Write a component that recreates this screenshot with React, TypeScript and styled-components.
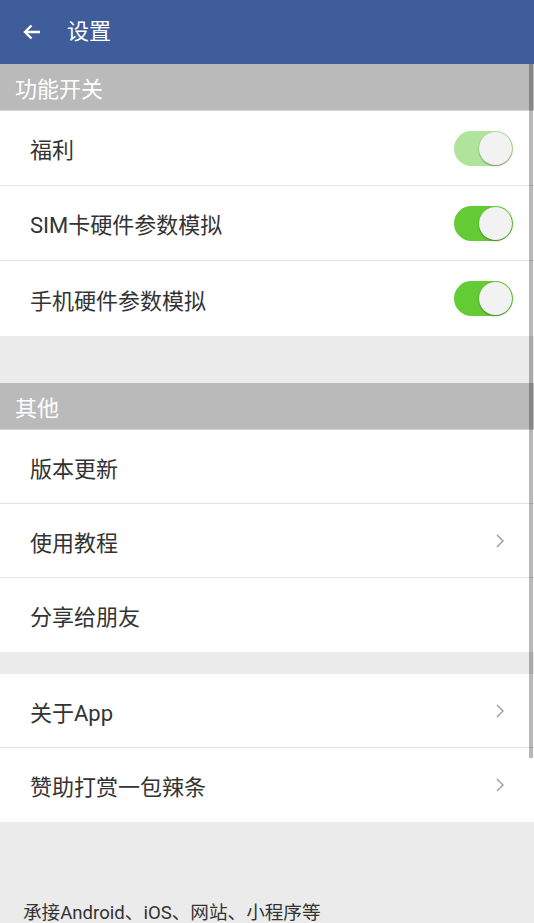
import React from 'react';
import styled, { createGlobalStyle } from 'styled-components';

const GlobalStyle = createGlobalStyle`
  html, body {
    margin: 0;
    padding: 0;
    background: #ebebeb;
  }
  body {
    font-family: Roboto, "Noto Sans CJK SC", sans-serif;
    overflow: hidden;
  }
`;

const Page = styled.div`
  position: relative;
  width: 534px;
  height: 923px;
  overflow: hidden;
  background: #ebebeb;
`;

const Header = styled.header`
  display: flex;
  align-items: center;
  height: 64px;
  padding-left: 20px;
  background: #3f5d9a;
  color: #fff;
`;

const BackButton = styled.div`
  display: flex;
  align-items: center;
  justify-content: center;
  width: 24px;
  height: 24px;
  margin-right: 23px;
`;

const Title = styled.h1`
  margin: 0;
  font-size: 22px;
  font-weight: 400;
  line-height: 1;
`;

const SectionTitle = styled.div`
  display: flex;
  align-items: center;
  height: 46px;
  padding-left: 15px;
  background: #bababa;
  color: #fff;
  font-size: 22px;
  border-bottom: 1px solid #d6d6d6;
`;

const Group = styled.div`
  background: #fff;
`;

const Row = styled.div<{ $h: number }>`
  display: flex;
  align-items: center;
  justify-content: space-between;
  height: ${p => p.$h}px;
  padding: 0 22px 0 30px;
  border-bottom: 1px solid #e2e2e2;
  box-sizing: content-box;
  color: #333;
  font-size: 22px;

  &:last-child {
    border-bottom: none;
    height: ${p => p.$h + 1}px;
  }
`;

const Spacer = styled.div<{ $h: number }>`
  height: ${p => p.$h}px;
  background: #ebebeb;
`;

const Toggle = styled.div<{ $faded?: boolean }>`
  position: relative;
  width: 59px;
  height: 35px;
  margin-right: -1px;
  border-radius: 18px;
  background: ${p => (p.$faded ? '#b0e39c' : '#63cb33')};
`;

const Knob = styled.div`
  position: absolute;
  right: 1px;
  top: 1px;
  width: 33px;
  height: 33px;
  border-radius: 50%;
  background: #f2f2f2;
  box-shadow: 0 1px 2px rgba(0, 0, 0, 0.35);
`;

const ChevronIcon = styled.svg`
  margin-right: 7px;
`;

const Footer = styled.div`
  padding: 78px 0 0 23px;
  color: #333;
  font-size: 18.6px;
  line-height: 26px;
`;

const ScrollBar = styled.div`
  position: absolute;
  top: 64px;
  right: 1px;
  width: 4px;
  height: 694px;
  background: rgba(0, 0, 0, 0.28);
`;

const Chevron = () => (
  <ChevronIcon width="10" height="16" viewBox="0 0 10 16">
    <path d="M2 2 L8 8 L2 14" fill="none" stroke="#9a9a9a" strokeWidth="1.4" />
  </ChevronIcon>
);

const App = () => {
  return (
    <Page>
      <GlobalStyle />
      <Header>
        <BackButton>
          <svg width="20" height="18" viewBox="0 0 20 18">
            <path d="M18 9 H3 M9.5 2.5 L3 9 L9.5 15.5" fill="none" stroke="#fff" strokeWidth="2.4" />
          </svg>
        </BackButton>
        <Title>设置</Title>
      </Header>

      <SectionTitle>功能开关</SectionTitle>
      <Group>
        <Row $h={74}>
          福利
          <Toggle $faded><Knob /></Toggle>
        </Row>
        <Row $h={74}>
          SIM卡硬件参数模拟
          <Toggle><Knob /></Toggle>
        </Row>
        <Row $h={74}>
          手机硬件参数模拟
          <Toggle><Knob /></Toggle>
        </Row>
      </Group>

      <Spacer $h={47} />
      <SectionTitle>其他</SectionTitle>
      <Group>
        <Row $h={73}>版本更新</Row>
        <Row $h={73}>
          使用教程
          <Chevron />
        </Row>
        <Row $h={73}>分享给朋友</Row>
      </Group>

      <Spacer $h={22} />
      <Group>
        <Row $h={73}>
          关于App
          <Chevron />
        </Row>
        <Row $h={73}>
          赞助打赏一包辣条
          <Chevron />
        </Row>
      </Group>

      <Footer>承接Android、iOS、网站、小程序等</Footer>
      <ScrollBar />
    </Page>
  );
};

export default App;
